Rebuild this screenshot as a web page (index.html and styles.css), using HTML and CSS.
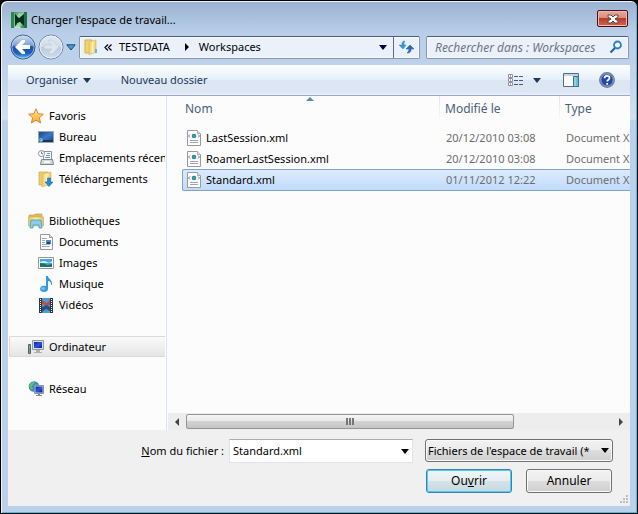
FILE: index.html
```html
<!DOCTYPE html>
<html lang="fr">
<head>
<meta charset="utf-8">
<title>Charger l'espace de travail...</title>
<link rel="stylesheet" href="styles.css">
</head>
<body>
<svg class="defs" aria-hidden="true">
  <defs>
    <linearGradient id="gBlue" x1="0" y1="0" x2="0" y2="1"><stop offset="0" stop-color="#d3e1f3"/><stop offset=".42" stop-color="#7fa3d8"/><stop offset=".5" stop-color="#1f4fa8"/><stop offset=".75" stop-color="#1d5cbc"/><stop offset="1" stop-color="#54ccff"/></linearGradient>
    <linearGradient id="gGrey" x1="0" y1="0" x2="0" y2="1"><stop offset="0" stop-color="#dfe9f4"/><stop offset=".48" stop-color="#d0dcea"/><stop offset=".52" stop-color="#bccbdd"/><stop offset="1" stop-color="#cfdeed"/></linearGradient>
    <linearGradient id="gFolder" x1="0" y1="0" x2="1" y2="0"><stop offset="0" stop-color="#e9c861"/><stop offset=".5" stop-color="#fbeeb0"/><stop offset="1" stop-color="#e6c668"/></linearGradient>
    <linearGradient id="gScreen" x1="0" y1="0" x2="1" y2="1"><stop offset="0" stop-color="#0a1c9c"/><stop offset=".5" stop-color="#2d55dd"/><stop offset="1" stop-color="#0a1a90"/></linearGradient>
    <linearGradient id="gDesk" x1="0" y1="0" x2="1" y2="1"><stop offset="0" stop-color="#173f86"/><stop offset=".5" stop-color="#3c78c2"/><stop offset="1" stop-color="#17448c"/></linearGradient>
    <linearGradient id="gStar" x1="0" y1="0" x2="0" y2="1"><stop offset="0" stop-color="#fff0a0"/><stop offset="1" stop-color="#fda526"/></linearGradient>
    <linearGradient id="gApp" x1="0" y1="0" x2="1" y2="1"><stop offset="0" stop-color="#3f8f62"/><stop offset=".5" stop-color="#8cc8a0"/><stop offset="1" stop-color="#1c7a40"/></linearGradient>
  </defs>
  <symbol id="xml" viewBox="0 0 16 16">
    <path d="M1.500.5h10l3 3v12h-13z" fill="#fff" stroke="#999"/><path d="M11.500.5v3h3" fill="#eee" stroke="#aaa"/>
    <path d="M4 4.500 2.500 6 4 7.500M12 4.500 13.500 6 12 7.500" fill="none" stroke="#777"/><circle cx="8" cy="6" r="2.300" fill="#2587b5"/><path d="M7 5h2v2H7z" fill="#38a964"/>
    <path d="M4 10.500h8M4 12.500h8" stroke="#a3a0bd"/>
  </symbol>
  <symbol id="caret" viewBox="0 0 8 5"><path d="M0 0h8L4 5z" fill="currentColor"/></symbol>
</svg>

<main class="window">
  <header class="titlebar">
    <svg class="app" viewBox="0 0 16 16"><path d="M0 0h16v16H0z" fill="url(#gApp)"/><path d="M0 0h3v16H0z" fill="#2e8653"/><path d="M3 16l4-4 3 4z" fill="#c0e2cb"/><path d="M13 0h3v16h-3z" fill="#1d7442"/><path d="M4 2l4 4 5-4v12l-4-4-5 4z" fill="#05301a"/><path d="M8 1l4 1-4 4-2-2zM6 11l3-1 2 3-2 2H5z" fill="#a5d5b4" opacity=".8"/></svg>
    <h1>Charger l'espace de travail...</h1>
    <button class="close" type="button" aria-label="Fermer"><svg viewBox="0 0 12 10"><path d="M1 1h3l2 2 2-2h3v2L8 5l3 2v2H8L6 7 4 9H1V7l3-2-3-2z" fill="#fff" stroke="#53474c"/></svg></button>
  </header>

  <nav class="navigation" aria-label="Emplacement">
    <div class="history">
      <button type="button" aria-label="Précédent"><svg class="round" viewBox="0 0 26 26"><circle cx="13" cy="13" r="12" fill="url(#gBlue)" stroke="#3f587e"/><circle cx="13" cy="13" r="11" fill="none" stroke="#c8dcf3" opacity=".65"/><path d="M5 13l7-7h3v2l-3 3h8v4h-8l3 3v2h-3z" fill="#fff"/></svg></button>
      <button type="button" aria-label="Suivant"><svg class="round" viewBox="0 0 26 26"><circle cx="13" cy="13" r="12" fill="url(#gGrey)" stroke="#7288a3"/><circle cx="13" cy="13" r="11" fill="none" stroke="#e8f1fa"/><path d="M21 13l-7-7h-3v2l3 3H6v4h8l-3 3v2h3z" fill="#dde6ee" stroke="#bac8d6" stroke-width=".6"/></svg></button>
      <button type="button" aria-label="Pages récentes"><svg class="recent" viewBox="0 0 10 7"><path d="M.8.8h8.400L5 6z" fill="#439cdb" stroke="#23466f"/></svg></button>
    </div>
    <div class="address">
      <svg class="folder" viewBox="0 0 14 16"><path d="M1 1h7v13H1z" fill="#f1d46e" stroke="#d5af46"/><path d="M5 3l7-2v12l-7 3z" fill="url(#gFolder)" stroke="#dcb853" stroke-width=".6"/><path d="M11 10h2v4h-2z" fill="#65b5df"/></svg>
      <span class="chevrons"><svg viewBox="0 0 8 7"><path d="M4 .5l-3 3 3 3M7.500.5l-3 3 3 3" fill="none" stroke="#000" stroke-width="1.200"/></svg></span>
      <a href="#testdata">TESTDATA</a>
      <svg class="sep" viewBox="0 0 4 8"><path d="M0 0l4 4-4 4z"/></svg>
      <a href="#workspaces">Workspaces</a>
      <button class="drop" type="button" aria-label="Emplacements précédents"><svg class="caret" viewBox="0 0 8 5"><use href="#caret"/></svg></button>
      <button class="refresh" type="button" aria-label="Actualiser"><svg viewBox="0 0 15 14"><path d="M6 1C3 1 3 3 3 5H0l4 4 3-4H5c0-2 0-3 1-4z" fill="#3994d2" stroke="#3994d2" stroke-width=".6"/><path d="M8 13c4 0 4-2 4-4h3l-4-4-4 4h3c0 2-1 3-2 4z" fill="#2f69b4" stroke="#2f69b4" stroke-width=".6"/></svg></button>
    </div>
    <div class="search"><input type="search" aria-label="Rechercher" placeholder="Rechercher dans : Workspaces"><svg viewBox="0 0 14 14"><circle cx="8.500" cy="5" r="3.500" fill="#eef7ff" stroke="#2d7fc5" stroke-width="1.800"/><path d="M6 8l-4.500 4.500" stroke="#2760a8" stroke-width="2.200"/></svg></div>
  </nav>

  <section class="client">
    <div class="toolbar">
      <button type="button">Organiser <svg class="caret" viewBox="0 0 8 5"><use href="#caret"/></svg></button>
      <button type="button">Nouveau dossier</button>
      <div class="tools">
        <button type="button" aria-label="Affichage"><svg class="views" viewBox="0 0 16 13"><g fill="#fff" stroke="#8995a6"><path d="M.5.5h4v3h-4zM.5 4.500h4v3h-4zM.5 8.500h4v3h-4z"/></g><path d="M2 2h1M2 10h1" stroke="#448"/><path d="M2 6h1" stroke="#d33"/><path d="M6 2.500h4m1 0h4M6 6.500h4m1 0h4M6 10.500h4m1 0h4" stroke="#4a5870"/></svg></button>
        <button class="more" type="button" aria-label="Plus d'options"><svg class="caret" viewBox="0 0 8 5"><use href="#caret"/></svg></button>
        <button class="preview" type="button" aria-label="Volet de visualisation"><svg viewBox="0 0 16 14"><path d="M.5.5h15v13H.5z" fill="#fff" stroke="#546a86"/><path d="M1 1h14v2H1z" fill="#c5d3e2"/><path d="M10.500 3.500h5v10h-5z" fill="#69c0dc" stroke="#3f708e"/><path d="M12 4v9" stroke="#b8e6f2"/></svg></button>
        <button type="button" aria-label="Aide"><svg class="help" viewBox="0 0 16 16"><circle cx="8" cy="8" r="7.300" fill="#2445a8" stroke="#777f8c" stroke-width="1.300"/><circle cx="8" cy="8" r="6.200" fill="none" stroke="#b8c8ed" stroke-width=".8"/><path d="M5.500 6.300C5.500 3 10.500 3 10.500 6c0 1.800-2.300 1.600-2.300 3.600M8.200 11v1.700" fill="none" stroke="#fff" stroke-width="1.800"/></svg></button>
      </div>
    </div>

    <div class="browser">
      <aside class="tree">
        <ul>
          <li><svg viewBox="0 0 16 16"><path d="M8 .8l2 5 5.300.4-4 3.500 1.300 5.300L8 12.200 3.400 15l1.200-5.300-4-3.500L6 5.800z" fill="url(#gStar)" stroke="#e07828" stroke-width=".9"/></svg><span>Favoris</span></li>
          <li class="sub"><svg viewBox="0 0 16 16"><path d="M.5 2.500h15v11H.5z" fill="url(#gDesk)" stroke="#98a7b9"/><path d="M1 11h14v2H1z" fill="#17335f"/><circle cx="3" cy="11" r="2" fill="#4fb6dc"/><path d="M2 10h1v1H2z" fill="#ec7a43"/><path d="M3 11h1v1H3z" fill="#efd75c"/></svg><span>Bureau</span></li>
          <li class="sub"><svg viewBox="0 0 16 16"><path d="M5.500 1.500h8v10h-8z" fill="#f8fafc" stroke="#8d969f"/><path d="M9 3.500h3M8 5.500h4M7 7.500h5" stroke="#5d9acb"/><path d="M3.500 9.500h11l1 5h-13z" fill="#d5d8dc" stroke="#7e868f"/><path d="M6 12h6" stroke="#fff" stroke-width="1.500"/><circle cx="3.500" cy="3.500" r="3" fill="#fff" stroke="#87929d"/><path d="M3.500 1.500v2.200H5" fill="none" stroke="#444" stroke-width=".7"/></svg><span>Emplacements récents</span></li>
          <li class="sub"><svg viewBox="0 0 16 16"><path d="M1 1h9v13H1z" fill="#edcd6c" stroke="#cba748" stroke-width=".7"/><path d="M4 3l9-2v12l-9 3z" fill="url(#gFolder)" stroke="#dab65b" stroke-width=".6"/><path d="M9.500 7h3v4H15l-4 4.500L7 11h2.500z" fill="#248dd5" stroke="#176cae" stroke-width=".6"/></svg><span>Téléchargements</span></li>
        </ul>
        <ul>
          <li><svg viewBox="0 0 16 16"><path d="M1 2h5l1-1h7v4H1z" fill="#dfbd54" stroke="#b99b43" stroke-width=".6"/><path d="M.5 4h15v9H.5z" fill="url(#gFolder)" stroke="#c7a84d" stroke-width=".6"/><path d="M3 7h10l1 8h-3v-3H5v3H2z" fill="#8dcdeb" stroke="#3d9bc8" stroke-width=".8"/></svg><span>Bibliothèques</span></li>
          <li class="sub"><svg viewBox="0 0 16 16"><path d="M2.500.5h9l3 3v12h-12z" fill="#fff" stroke="#8e9aa8"/><path d="M11.500.5v3h3" fill="#dce3ea" stroke="#8e9aa8"/><path d="M4 4.500h5M4 6.500h3M4 8.500h3M4 10.500h8M4 12.500h8" stroke="#a0aebd"/><path d="M8 6h5v4H8z" fill="#4b8ccb"/><path d="M9 8h3v2H9z" fill="#263f70"/></svg><span>Documents</span></li>
          <li class="sub"><svg viewBox="0 0 16 16"><path d="M.5 2.500h15v11H.5z" fill="#fff" stroke="#909aa5"/><path d="M2 4h12v8H2z" fill="#4ba6dd"/><path d="M2 7q4-2 7 0t5-1v2H2z" fill="#d0edf5"/><path d="M2 8q5 0 7 2l5-1v3H2z" fill="#23734f"/><path d="M2 11h12v1H2z" fill="#236d9d"/></svg><span>Images</span></li>
          <li class="sub"><svg viewBox="0 0 16 16"><path d="M8 0h2c0 3 5 4 4 9h-1c0-3-1-4-3-4v8c0 2-2 3-4 3s-4-1-4-3c0-3 3-4 6-3z" fill="#3598df"/><ellipse cx="5" cy="12.500" rx="2.300" ry="1.500" fill="#65c1f2"/></svg><span>Musique</span></li>
          <li class="sub"><svg viewBox="0 0 16 16"><path d="M1 1h14v15H1z" fill="#303642"/><path d="M4 1h8v15H4z" fill="#4c9bd8"/><path d="M4 3l5 3 3-3v5l-4 1-4-2z" fill="#b84f46"/><path d="M4 10l5-2 3 2v4l-4-2-4 3z" fill="#215282"/><path d="M2.500 2v13M13.500 2v13" stroke="#fff" stroke-dasharray="1 1"/></svg><span>Vidéos</span></li>
        </ul>
        <ul>
          <li class="current"><svg viewBox="0 0 16 16"><path d="M4.500 1.500h11v9h-11z" fill="#d9dde1" stroke="#90979f"/><path d="M6 3h8v6H6z" fill="url(#gScreen)"/><path d="M8 11h4v2h2v1H6v-1h2z" fill="#aab1b8"/><path d="M.5 5.500h2v9h-2z" fill="#89928e" stroke="#59625e"/><path d="M1 7h1v2H1z" fill="#59e43e"/></svg><span>Ordinateur</span></li>
        </ul>
        <ul>
          <li><svg viewBox="0 0 16 16"><circle cx="6" cy="5.500" r="5.300" fill="#3288c9"/><path d="M1 4q3-4 6-3.500L6 3 4 5l1 3-2 1zM7 3l4 1-2 3z" fill="#60c05d"/><path d="M6.500 4.500h9v8h-9z" fill="#cbd2da" stroke="#8690a2"/><path d="M7.500 5.500h7v6h-7z" fill="url(#gScreen)"/><path d="M10 13h2v1h2v1H8v-1h2z" fill="#7d8794"/></svg><span>Réseau</span></li>
        </ul>
      </aside>

      <div class="files">
        <div class="list">
          <table>
            <colgroup><col class="c-name"><col class="c-date"><col class="c-type"></colgroup>
            <thead><tr><th scope="col">Nom<svg class="sort" viewBox="0 0 8 4"><path d="M0 4l4-4 4 4z" fill="#4f8eaf"/></svg></th><th scope="col">Modifié le</th><th scope="col">Type</th></tr></thead>
            <tbody>
              <tr><td><svg viewBox="0 0 16 16"><use href="#xml"/></svg>LastSession.xml</td><td>20/12/2010 03:08</td><td>Document XML</td></tr>
              <tr><td><svg viewBox="0 0 16 16"><use href="#xml"/></svg>RoamerLastSession.xml</td><td>20/12/2010 03:08</td><td>Document XML</td></tr>
              <tr class="selected"><td><svg viewBox="0 0 16 16"><use href="#xml"/></svg>Standard.xml</td><td>01/11/2012 12:22</td><td>Document XML</td></tr>
            </tbody>
          </table>
        </div>
        <div class="scrollbar">
          <button type="button" aria-label="Défiler à gauche"><svg viewBox="0 0 4 8"><path d="M4 0L0 4l4 4z" fill="#444"/></svg></button>
          <div class="track"><div class="thumb"><svg viewBox="0 0 8 7"><path d="M1 0v7M4 0v7M7 0v7" stroke="#777" stroke-width="2"/></svg></div></div>
          <button type="button" aria-label="Défiler à droite"><svg viewBox="0 0 4 8"><path d="M0 0l4 4-4 4z" fill="#444"/></svg></button>
        </div>
      </div>
    </div>

    <form class="footer">
      <label for="filename"><u>N</u>om du fichier :</label>
      <div class="combo"><input id="filename" type="text" value="Standard.xml"><svg class="caret" viewBox="0 0 8 5"><use href="#caret"/></svg></div>
      <div class="actions">
        <div class="filter"><select aria-label="Type de fichier"><option>Fichiers de l'espace de travail (*</option></select><svg class="caret" viewBox="0 0 8 5"><use href="#caret"/></svg></div>
        <div class="buttons"><button class="primary" type="button">Ou<u>v</u>rir</button><button type="button">Annuler</button></div>
      </div>
      <svg class="grip" viewBox="0 0 9 9"><path d="M7 0h2v2H7zM7 3h2v2H7zM4 3h2v2H4zM7 6h2v2H7zM4 6h2v2H4zM1 6h2v2H1z" fill="#bdbdbd"/></svg>
    </form>
  </section>
</main>
</body>
</html>
```
FILE: styles.css
```css
* { box-sizing: border-box; }
html { background: #000; }
body { margin: 0; font: 11px/16px "Noto Sans", "Open Sans", sans-serif; color: #000; }
svg { display: block; flex: none; }
.defs { position: absolute; width: 0; height: 0; }
button { font: inherit; color: inherit; background: none; border: 0; padding: 0; }
input, select { font: inherit; color: inherit; }
a { color: inherit; text-decoration: none; }
.caret { width: 8px; height: 5px; }

.window {
  display: flex; flex-direction: column; height: 100vh; min-height: 400px;
  padding: 0 7px 7px;
  border: 1px solid #000; border-radius: 7px 7px 0 0;
  box-shadow: inset 1px 1px #eef5fc, inset -1px -1px #3cc5e2;
  background: linear-gradient(#9ab2d0, #b9cfe9 32px, #bdd1ea 60px, #d2e0f0 118px, #b9d1ea 120px);
}

.titlebar { display: flex; align-items: center; height: 34px; padding: 3px 2px 0 3px; }
.app { width: 16px; height: 16px; }
h1 { flex: 1; margin: 0 0 0 4px; font-size: 11px; font-weight: 400; }
.close {
  display: flex; align-items: center; justify-content: center; align-self: flex-start;
  width: 31px; height: 17px; margin-top: 6px;
  border: 1px solid #4a1020; border-radius: 2px;
  background: linear-gradient(#e8a99c, #d98b7d 48%, #b93b25 50%, #cf6a50);
  box-shadow: inset 0 0 0 1px #efb9ae;
}
.close svg { width: 12px; height: 10px; }

.navigation { display: flex; align-items: center; height: 30px; padding: 0 1px 6px 0; }
.history { display: flex; align-items: center; width: 71px; padding-left: 2px; }
.history button + button { margin-left: 2px; }
.round { width: 26px; height: 26px; }
.recent { width: 10px; height: 7px; }
.address, .search {
  display: flex; align-items: center; height: 23px;
  border: 1px solid #8796ab; border-top-color: #4f5e75; border-radius: 2px;
  background: #eaf1fa; box-shadow: inset 0 0 0 1px #f6f9fd;
}
.address { flex: 1; padding-left: 4px; }
.folder { width: 14px; height: 16px; }
.chevrons { width: 8px; margin: 0 7px 0 6px; }
.chevrons svg { width: 8px; height: 7px; }
.sep { width: 4px; height: 8px; margin: 0 10px 0 15px; }
.drop { display: flex; margin-left: auto; padding: 8px 6px; color: #000050; }
.refresh { display: flex; align-items: center; justify-content: center; align-self: stretch; width: 26px; border-left: 1px solid #5f6c80; }
.refresh svg { width: 15px; height: 14px; }
.search { flex: 0 1 201px; margin-left: 6px; padding: 0 5px 0 8px; }
.search input { flex: 1; min-width: 0; height: 20px; padding: 0; border: 0; outline: 0; background: none; font-size: 12px; font-style: italic; }
.search input::placeholder { color: #6f7680; opacity: 1; }
.search svg { width: 14px; height: 14px; }

.client { display: flex; flex: 1; flex-direction: column; min-height: 0; background: #f0f0f0; }
.toolbar {
  display: flex; align-items: center; gap: 30px; height: 31px; padding: 0 15px 0 18px;
  color: #1e395b; border-bottom: 1px solid #9aaac3;
  background: linear-gradient(#fdfeff, #e6f0fa 48%, #dce6f4 50%, #dde7f3 90%, #e9f0f8);
}
.toolbar button { display: flex; align-items: center; gap: 5px; }
.tools { display: flex; align-items: center; margin-left: auto; }
.views { width: 16px; height: 13px; }
.tools .more { margin: 0 22px 0 9px; }
.tools .preview { margin-right: 20px; }
.preview svg { width: 16px; height: 14px; }
.help { width: 16px; height: 16px; }

.browser { display: flex; flex: 1; min-height: 0; background: #fcfcfc; }
.tree { flex: none; width: 159px; padding: 9px 1px 0; border-right: 1px solid #d6e5f5; overflow: hidden; }
.tree ul { margin: 0 0 21px; padding: 0; list-style: none; }
.tree li { display: flex; align-items: center; gap: 5px; height: 21px; padding-left: 19px; overflow: hidden; white-space: nowrap; }
.tree .sub { padding-left: 29px; }
.tree svg { width: 16px; height: 16px; }
.tree .current {
  padding-left: 18px; border: 1px solid #d9d9d9; border-right: 0; border-radius: 2px 0 0 2px;
  background: linear-gradient(#fafafa, #e5e5e5);
}

.files { display: flex; flex: 1; flex-direction: column; min-width: 0; }
.list { flex: 1; min-height: 0; padding-left: 15px; overflow: hidden; }
table { width: 500px; table-layout: fixed; border-collapse: separate; border-spacing: 0; }
.c-name { width: 257px; }
.c-date { width: 120px; }
th { position: relative; height: 31px; padding: 0 0 6px 6px; text-align: left; font-size: 12px; font-weight: 400; color: #4c607a; }
th:first-child { padding-left: 3px; }
th + th { background: linear-gradient(#d9e6f3, #fcfcfc) 0 0 / 1px 26px no-repeat; }
.sort { position: absolute; top: 1px; left: 50%; width: 8px; height: 4px; margin-left: -5px; }
td { height: 21px; padding: 0 0 0 7px; white-space: nowrap; color: #6d6d6d; }
td:first-child { display: flex; align-items: center; gap: 4px; padding-left: 4px; color: #000; }
td svg { width: 16px; height: 16px; }
.selected td { height: 22px; border: solid #7da2ce; border-width: 1px 0; background: linear-gradient(#dcebfd, #c1dbfc); }
.selected td:first-child { padding-left: 3px; border-left-width: 1px; border-radius: 2px 0 0 2px; }

.scrollbar { display: flex; height: 17px; margin-left: 1px; background: #ededed; }
.scrollbar button { display: flex; align-items: center; justify-content: center; width: 18px; }
.scrollbar button svg { width: 4px; height: 8px; }
.track { display: flex; flex: 1; padding: 1px 0; }
.thumb {
  display: flex; align-items: center; justify-content: center; width: 77%;
  border: 1px solid #959595; border-radius: 2px;
  background: linear-gradient(#f5f5f5, #e8e8e8 48%, #d2d2d2 50%, #c5c5c7);
}
.thumb svg { width: 8px; height: 7px; }

.footer { position: relative; display: flex; align-items: flex-start; height: 76px; padding: 9px 17px 0 0; }
.footer label { flex: 1; padding: 4px 5px 0 0; text-align: right; white-space: nowrap; }
.combo { display: flex; align-items: center; width: 184px; height: 24px; padding: 0 3px; border: 1px solid #e2e3ea; border-top-color: #abadb3; background: #fff; }
.combo input { flex: 1; min-width: 0; padding: 0; border: 0; outline: 0; background: none; }
.actions { width: 188px; margin-left: 12px; }
.filter { position: relative; }
.filter select, .buttons button {
  border: 1px solid #707070; border-radius: 3px; box-shadow: inset 0 0 0 1px #fafafa;
  background: linear-gradient(#f2f2f2, #ebebeb 48%, #dddddd 50%, #cfcfcf);
}
.filter select { display: block; width: 100%; height: 23px; padding: 0 14px 0 2px; appearance: none; }
.filter .caret { position: absolute; top: 9px; right: 4px; pointer-events: none; }
.buttons { display: flex; gap: 14px; margin-top: 7px; padding: 0 1px; }
.buttons button { flex: 1; height: 24px; font-size: 12px; }
.buttons .primary { border-color: #3c7fb1; box-shadow: inset 0 0 0 1px #48d0f5; background: linear-gradient(#f0f4f6, #e6eef2 48%, #d5e2ea 50%, #c8d8e1); }
.grip { position: absolute; right: 2px; bottom: 2px; width: 9px; height: 9px; }
```
